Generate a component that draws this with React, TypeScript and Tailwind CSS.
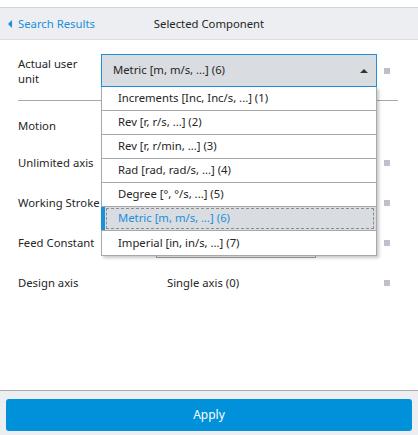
import React from "react";

const items = [
  "Increments [Inc, Inc/s, ...] (1)",
  "Rev [r, r/s, ...] (2)",
  "Rev [r, r/min, ...] (3)",
  "Rad [rad, rad/s, ...] (4)",
  "Degree [°, °/s, ...] (5)",
  "Metric [m, m/s, ...] (6)",
  "Imperial [in, in/s, ...] (7)",
];

function Sq() {
  return <div className="w-[6px] h-[6px] bg-[#bcc1c7]" />;
}

export default function App() {
  return (
    <div
      className="w-[418px] h-[435px] bg-white flex flex-col relative overflow-hidden text-[11.3px] text-[#262626]"
      style={{ fontFamily: '"Noto Sans", "Open Sans", sans-serif' }}
    >
      <div className="h-[7px] shrink-0" />
      <div className="h-[33px] shrink-0 bg-[#eceef1] border-t border-[#d3d5d8] border-b border-b-[#dcdee1] grid grid-cols-[1fr_auto_1fr] items-center pt-[1px]">
        <div className="flex items-center pl-[8px] text-[#1b8fd9] text-[12px]">
          <svg width="4" height="8" viewBox="0 0 4 8" className="mr-[6px]">
            <path d="M4 0 L0 4 L4 8 Z" fill="#1b8fd9" />
          </svg>
          <span className="text-[11.3px]">Search Results</span>
        </div>
        <div className="text-[#262626]">Selected Component</div>
        <div />
      </div>

      <div className="flex-1 flex flex-col pt-[14px]">
        <div className="grid grid-cols-[83px_276px_1fr] pl-[18px]">
          <div className="w-[66px] leading-[15px] pt-[2px]">Actual user unit</div>
          <div className="h-[33px] border border-[#1b8fd9] bg-[#d9dce1] flex items-center pl-[11px] pr-[8px]">
            <span className="flex-1">Metric [m, m/s, ...] (6)</span>
            <svg width="8" height="4" viewBox="0 0 8 4">
              <path d="M0 4 L4 0 L8 4 Z" fill="#333" />
            </svg>
          </div>
          <div className="flex items-center pl-[7px]">
            <Sq />
          </div>
        </div>

        <div className="ml-[18px] w-[380px] h-px bg-[#a6a8ab] mt-[13px] mb-[8px]" />

        <div className="h-[34px] flex items-center pl-[18px]">Motion</div>

        {[
          { label: "Unlimited axis", value: null },
          { label: "Working Stroke", value: "input" },
          { label: "Feed Constant", value: "input" },
          { label: "Design axis", value: "Single axis (0)" },
        ].map((r) => (
          <div key={r.label} className="h-[40px] grid grid-cols-[83px_276px_1fr] pl-[18px] items-center">
            <div className="whitespace-nowrap">{r.label}</div>
            <div className="flex items-center">
              {r.value === "input" ? (
                <div className="ml-[55px] w-[160px] h-[30px] border border-[#a6a8ab] bg-white" />
              ) : r.value ? (
                <span className="ml-[66px]">{r.value}</span>
              ) : null}
            </div>
            <div className="flex items-center pl-[7px]">
              <Sq />
            </div>
          </div>
        ))}
      </div>

      <div className="shrink-0 h-[45px] bg-[#eceef1] border-t border-[#a9abae] px-[6px] pt-[8px]">
        <button className="w-full h-[32px] rounded-[3px] bg-[#0091da] text-white text-[12px]">Apply</button>
      </div>

      <div className="absolute top-[87px] left-[101px] w-[276px] bg-white border-l border-r border-b border-[#a6a8ab] shadow-[2px_2px_3px_rgba(0,0,0,0.22)]">
        {items.map((it, i) => {
          const sel = i === 5;
          const last = i === items.length - 1;
          return (
            <div
              key={it}
              className={
                "h-[24px] relative flex items-center pl-[16px] " +
                (last ? "" : "border-b border-[#a6a8ab] ") +
                (sel ? "bg-[#d9dce1] text-[#1b8fd9]" : "")
              }
            >
              {sel && (
                <>
                  <div className="absolute left-[-1px] top-0 bottom-0 w-[4px] bg-[#1b8fd9]" />
                  <div className="absolute left-[4px] right-[2px] top-[1px] bottom-[1px] border border-dashed border-[#8a8d91]" />
                </>
              )}
              <span className="relative">{it}</span>
            </div>
          );
        })}
      </div>
    </div>
  );
}
